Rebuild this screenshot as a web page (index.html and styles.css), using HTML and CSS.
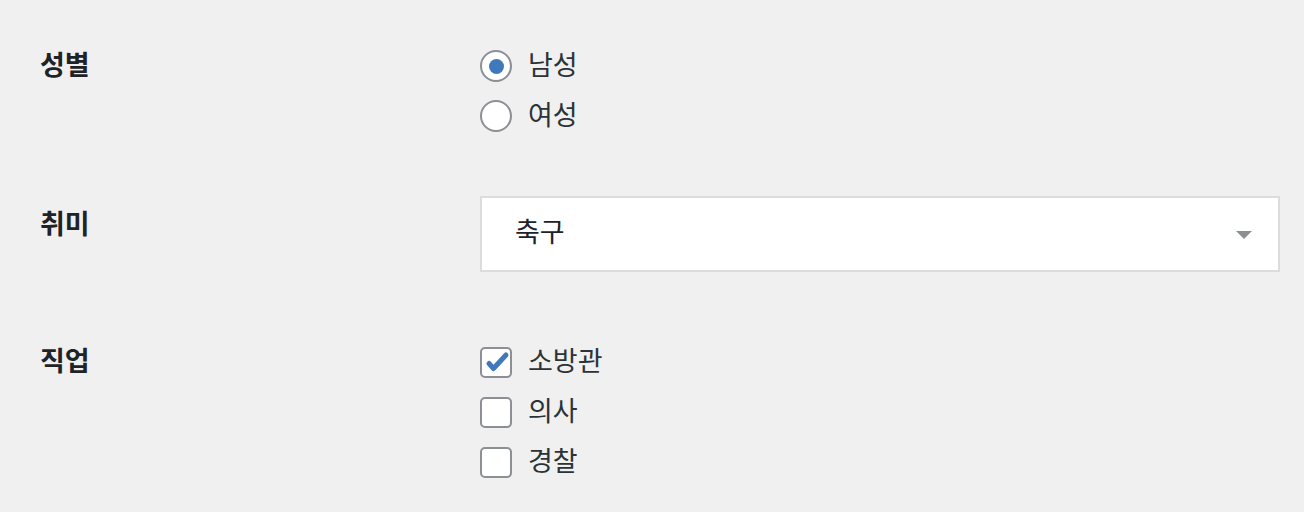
FILE: index.html
```html
<!DOCTYPE html>
<html lang="ko">
<head>
  <meta charset="UTF-8" />
  <meta name="viewport" content="width=device-width, initial-scale=1" />
  <title>프로필</title>
  <link rel="stylesheet" href="styles.css">
</head>
<body>
  <form class="form-table">
    <div class="row row-gender">
      <div class="label">성별</div>
      <div class="field">
        <label class="option">
          <span class="radio checked"></span>
          <span class="text">남성</span>
        </label>
        <label class="option">
          <span class="radio"></span>
          <span class="text">여성</span>
        </label>
      </div>
    </div>

    <div class="row row-hobby">
      <div class="label">취미</div>
      <div class="field">
        <div class="select">
          <span class="text">축구</span>
          <span class="arrow"></span>
        </div>
      </div>
    </div>

    <div class="row row-job">
      <div class="label">직업</div>
      <div class="field">
        <label class="option">
          <span class="checkbox">
            <svg viewBox="0 0 28 27" width="28" height="27">
              <polyline points="7,14.5 11.5,19.5 24,6" fill="none" stroke="#3f78bd" stroke-width="5" stroke-linecap="round" stroke-linejoin="round" />
            </svg>
          </span>
          <span class="text">소방관</span>
        </label>
        <label class="option">
          <span class="checkbox"></span>
          <span class="text">의사</span>
        </label>
        <label class="option">
          <span class="checkbox"></span>
          <span class="text">경찰</span>
        </label>
      </div>
    </div>
  </form>
</body>
</html>
```

FILE: styles.css
```css
body {
  margin: 0;
  background: #f0f0f1;
  font-family: "Noto Sans CJK KR", "Noto Sans", sans-serif;
  color: #1d2327;
}
.form-table {
  display: flex;
  flex-direction: column;
  padding: 0 24px 0 40px;
}
.row {
  display: grid;
  grid-template-columns: 440px 1fr;
}
.row-gender {
  margin-top: 41px;
}
.row-hobby {
  margin-top: 55px;
}
.row-job {
  margin-top: 65px;
}
.label {
  font-size: 27px;
  font-weight: bold;
  line-height: 50px;
  margin-top: -2px;
}
.row-hobby .label {
  margin-top: 2px;
}
.option {
  display: flex;
  align-items: center;
  gap: 16px;
  height: 50px;
  font-size: 27px;
  color: #2c3338;
}
.text {
  line-height: 1;
  padding-bottom: 5px;
}
.radio {
  width: 32px;
  height: 32px;
  box-sizing: border-box;
  border: 2px solid #8c8f94;
  border-radius: 50%;
  background: #fff;
  display: flex;
  align-items: center;
  justify-content: center;
}
.radio.checked::before {
  content: "";
  width: 15px;
  height: 15px;
  border-radius: 50%;
  background: #3f78bd;
}
.checkbox {
  width: 32px;
  height: 31px;
  box-sizing: border-box;
  border: 2px solid #8c8f94;
  border-radius: 5px;
  background: #fff;
  display: flex;
}
.select {
  height: 76px;
  box-sizing: border-box;
  border: 2px solid #dcdcde;
  background: #fff;
  display: flex;
  align-items: center;
  justify-content: space-between;
  padding: 0 26px 0 33px;
  font-size: 27px;
  color: #1d2327;
}
.select .text {
  padding-bottom: 8px;
}
.arrow {
  width: 0;
  height: 0;
  border-left: 8px solid transparent;
  border-right: 8px solid transparent;
  border-top: 8px solid #8c8f94;
  margin-top: 2px;
}
```
